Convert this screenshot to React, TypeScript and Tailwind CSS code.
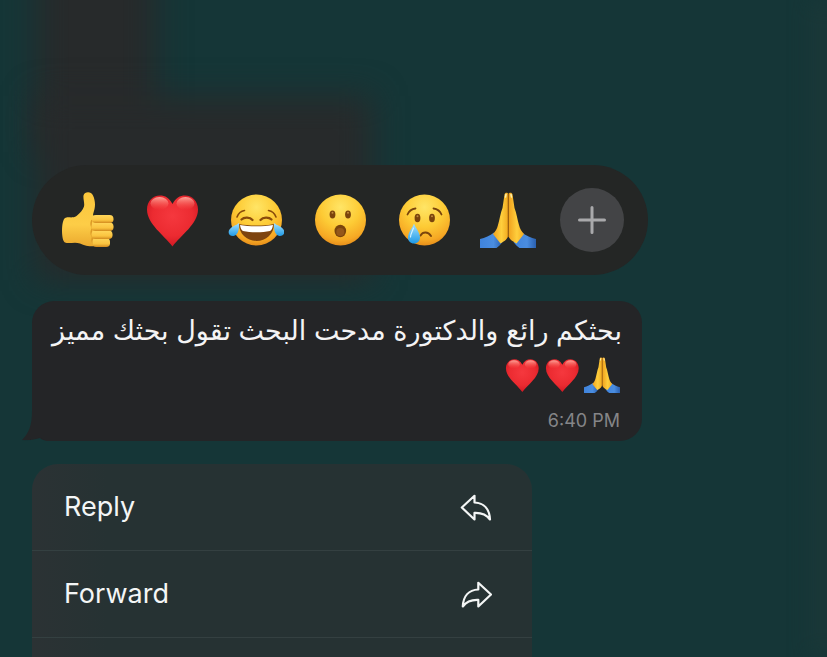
import type { ReactNode } from 'react';

interface EmojiProps {
  className?: string;
}

interface Reaction {
  name: string;
  icon: ReactNode;
}

interface MenuAction {
  label: string;
  icon: ReactNode;
}

// Gradients shared by every emoji on the page
const EmojiDefs = () => (
  <svg className="absolute size-0" aria-hidden="true">
    <defs>
      <radialGradient id="face" cx="50%" cy="25%" r="76%">
        <stop offset="0" stopColor="#ffe566" />
        <stop offset="0.5" stopColor="#fdcb35" />
        <stop offset="0.85" stopColor="#f6a824" />
        <stop offset="1" stopColor="#e58c1a" />
      </radialGradient>
      <radialGradient id="heart" cx="50%" cy="40%" r="65%">
        <stop offset="0" stopColor="#f5383e" />
        <stop offset="0.6" stopColor="#ec2b31" />
        <stop offset="1" stopColor="#cb1420" />
      </radialGradient>
      <linearGradient id="shine" x1="0" y1="0" x2="0" y2="1">
        <stop offset="0" stopColor="#ffb3a6" stopOpacity="0.9" />
        <stop offset="1" stopColor="#ff5a50" stopOpacity="0" />
      </linearGradient>
      <linearGradient id="skin" x1="0" y1="0" x2="0" y2="1">
        <stop offset="0" stopColor="#fbc63c" />
        <stop offset="0.6" stopColor="#fdcd47" />
        <stop offset="1" stopColor="#eba92e" />
      </linearGradient>
      <linearGradient id="finger" x1="0" y1="0" x2="0" y2="1">
        <stop offset="0" stopColor="#ffd65a" />
        <stop offset="0.65" stopColor="#fac33f" />
        <stop offset="1" stopColor="#d28a1e" />
      </linearGradient>
      <linearGradient id="palm" x1="0" y1="0" x2="1" y2="0">
        <stop offset="0" stopColor="#f0a01c" />
        <stop offset="0.55" stopColor="#ffcf3d" />
        <stop offset="1" stopColor="#f2a91f" />
      </linearGradient>
      <linearGradient id="sleeve" x1="0" y1="0" x2="1" y2="0">
        <stop offset="0" stopColor="#3f83dc" />
        <stop offset="0.6" stopColor="#4a8de0" />
        <stop offset="1" stopColor="#2a5fae" />
      </linearGradient>
      <linearGradient id="tear" x1="0" y1="0" x2="0" y2="1">
        <stop offset="0" stopColor="#a5e2ff" />
        <stop offset="1" stopColor="#1f9ae6" />
      </linearGradient>
    </defs>
  </svg>
);

const ThumbsUp = ({ className }: EmojiProps) => (
  <svg className={className} viewBox="0 0 56 56" aria-hidden="true">
    <path
      d="M5 26C9 24.500 13 26.500 16.500 24C20 21 23 18 24 14.500C24.800 11 23 7 23.500 3.500C24.500 -.5 31 -1 33 3.500C35 7.500 35.500 13 34.500 17C34 19.500 33 21.500 33 23.500L40 25V53.500C34 55 26 54.500 20 51.500C15 49.500 9 52 5 50.500C1 48.500 1 29 5 26Z"
      fill="url(#skin)"
    />
    <path d="M32 28C30.500 31 31 34 32.500 36C31 39 31 43 32.500 45C31.500 48 32 50 33.500 52" fill="none" stroke="#dc9a26" strokeWidth="1.500" />
    <rect x="32.500" y="46" width="17.500" height="9" rx="3.800" fill="url(#finger)" />
    <rect x="31.500" y="38.500" width="21" height="8.500" rx="3.800" fill="url(#finger)" />
    <rect x="31.500" y="30.500" width="22" height="8.500" rx="3.800" fill="url(#finger)" />
    <rect x="32" y="23" width="21.500" height="8" rx="3.800" fill="url(#finger)" />
  </svg>
);

const Heart = ({ className }: EmojiProps) => (
  <svg className={className} viewBox="0 0 56 56" aria-hidden="true">
    <path
      d="M28.500 12C31.500 6 36 3.500 41 3.500C48.500 3.500 54 9.500 54 17.500C54 32 37 43 28.500 54.500C20 43 3 32 3 17.500C3 9.500 8.500 3.500 16 3.500C21 3.500 25.500 6 28.500 12Z"
      fill="url(#heart)"
    />
    <ellipse cx="15.500" cy="11.500" rx="9" ry="6.500" fill="url(#shine)" />
    <ellipse cx="41.500" cy="11.500" rx="9" ry="6.500" fill="url(#shine)" />
  </svg>
);

const Joy = ({ className }: EmojiProps) => (
  <svg className={className} viewBox="0 0 56 56" aria-hidden="true">
    <circle cx="28.500" cy="28" r="25.500" fill="url(#face)" />
    <g fill="none" stroke="#8a4b0b" strokeLinecap="round">
      <path d="M9 25C10.500 21 13 19 16.500 18.500M48 25C46.500 21 44 19 40.500 18.500" strokeWidth="1.600" />
      <path d="M13.500 27.500C16 24.800 22 24.800 24.500 28M32.500 28C35 24.800 41 24.800 43.500 27.500" strokeWidth="2.200" />
    </g>
    <path d="M11 32C20 34 37 34 46 32C46 42 38 49 28.500 49C19 49 11 42 11 32Z" fill="#7d4410" />
    <path d="M12 33C21 34.800 36 34.800 45 33C44.500 36.500 43.500 38 42 39C34 40.800 23 40.800 15 39C13.500 38 12.500 36.500 12 33Z" fill="#fff" />
    <path d="M11 31C11.500 36 10.500 43.500 5.500 44C1 44.300 -.5 40.500 1.500 37.500C3.500 34.500 8 33.500 11 31Z" fill="url(#tear)" />
    <path d="M46 31C45.500 36 46.500 43.500 51.500 44C56 44.300 57.500 40.500 55.500 37.500C53.500 34.500 49 33.500 46 31Z" fill="url(#tear)" />
  </svg>
);

const Astonished = ({ className }: EmojiProps) => (
  <svg className={className} viewBox="0 0 56 56" aria-hidden="true">
    <circle cx="28.500" cy="28" r="25.500" fill="url(#face)" />
    <g fill="#7a440c">
      <ellipse cx="20.500" cy="22.500" rx="2.900" ry="4" />
      <ellipse cx="36" cy="22.500" rx="2.900" ry="4" />
      <ellipse cx="28.300" cy="39" rx="5.800" ry="6.200" />
    </g>
    <ellipse cx="28.300" cy="40" rx="4" ry="4" fill="#95571a" />
    <circle cx="20.500" cy="20.800" r="1" fill="#c08a3a" />
    <circle cx="36" cy="20.800" r="1" fill="#c08a3a" />
  </svg>
);

const Crying = ({ className }: EmojiProps) => (
  <svg className={className} viewBox="0 0 56 56" aria-hidden="true">
    <circle cx="28.500" cy="28" r="25.500" fill="url(#face)" />
    <g fill="none" stroke="#7a440c" strokeLinecap="round">
      <path d="M11.500 22.500C13 19 16 17 19.500 16.500M45.500 22.500C44 19 41 17 37.500 16.500" strokeWidth="1.800" />
      <path d="M24.500 43.500C27 39.500 32 39.500 35 44" strokeWidth="2" />
    </g>
    <ellipse cx="21.500" cy="26" rx="2.900" ry="4.300" fill="#7a440c" />
    <ellipse cx="36" cy="26" rx="2.900" ry="4.300" fill="#7a440c" />
    <circle cx="21.500" cy="24.300" r="1" fill="#c08a3a" />
    <circle cx="36" cy="24.300" r="1" fill="#c08a3a" />
    <path d="M18 31.500C19.500 36 24 40.500 24 45.500C24 49 21.500 51.500 18 51.500C14.500 51.500 12 49 12 45.500C12 40.500 16.500 36 18 31.500Z" fill="url(#tear)" />
    <path d="M17.500 36C16.500 39 14.500 42 14.500 45" fill="none" stroke="#d4f2ff" strokeWidth="1.200" strokeLinecap="round" />
  </svg>
);

const FoldedHands = ({ className }: EmojiProps) => (
  <svg className={className} viewBox="0 0 56 56" aria-hidden="true">
    <path d="M0 47C5 46 10 43.500 14 40.500L22.500 50C20.500 53 18 55 16.500 56H0Z" fill="url(#sleeve)" />
    <path d="M56 47C51 46 46 43.500 42 40.500L33.500 50C35.500 53 38 55 39.500 56H56Z" fill="url(#sleeve)" />
    <path d="M28.300 2C27.500 0 25 .3 24.500 2.500L22.500 16C20.500 21 19.500 28 18 33C17 37 15.500 39.500 13 42L20.500 51.500C25 49 28 46.500 28.300 43Z" fill="url(#palm)" />
    <path d="M28.300 2C29.500 0 32 .3 32.500 2.500L34.500 16C36.500 21 37.500 28 39 33C40 37 41.500 39.500 44 42L36.500 51.500C32 49 28.500 46.500 28.300 43Z" fill="url(#palm)" />
    <path d="M28.300 2V45" stroke="#9b5d0c" strokeWidth="1.200" />
    <path d="M26 2.500L25.500 5M31 2.500L31.500 5" stroke="#fff0a8" strokeWidth="1.500" strokeLinecap="round" />
  </svg>
);

const ReplyArrow = () => (
  <svg className="size-8" viewBox="0 0 32 32" fill="none" stroke="currentColor" strokeWidth="2.200" strokeLinejoin="round" aria-hidden="true">
    <path d="M1.800 16.500L14.500 4.800V11.500C24 11.800 29.500 18 30 28.500C26.500 23.500 22 21.500 14.500 21.800V28.500Z" />
  </svg>
);

const ForwardArrow = () => (
  <svg className="size-8" viewBox="0 0 32 32" fill="none" stroke="currentColor" strokeWidth="2.200" strokeLinejoin="round" aria-hidden="true">
    <path d="M31 16.500L18.300 4.800V11.500C8.800 11.800 3.300 18 2.800 28.500C6.300 23.500 10.800 21.500 18.300 21.800V28.500Z" />
  </svg>
);

const reactions: Reaction[] = [
  { name: 'Thumbs up', icon: <ThumbsUp className="size-14" /> },
  { name: 'Heart', icon: <Heart className="size-14" /> },
  { name: 'Tears of joy', icon: <Joy className="size-14" /> },
  { name: 'Astonished', icon: <Astonished className="size-14" /> },
  { name: 'Crying', icon: <Crying className="size-14" /> },
  { name: 'Folded hands', icon: <FoldedHands className="size-14" /> },
];

const actions: MenuAction[] = [
  { label: 'Reply', icon: <ReplyArrow /> },
  { label: 'Forward', icon: <ForwardArrow /> },
];

const ReactionBar = () => (
  <div className="flex w-full max-w-[616px] items-center justify-between rounded-full bg-[#242625] px-6 py-[23px]">
    {reactions.map((reaction) => (
      <button key={reaction.name} type="button" aria-label={reaction.name} className="flex size-16 items-center justify-center">
        {reaction.icon}
      </button>
    ))}
    <button
      type="button"
      aria-label="More reactions"
      className="flex size-16 items-center justify-center rounded-full bg-[#434446] text-[#a9a9ab]"
    >
      <svg className="size-8" viewBox="0 0 32 32" stroke="currentColor" strokeWidth="3" strokeLinecap="round" aria-hidden="true">
        <path d="M16 3.500V28.500M3.500 16H28.500" />
      </svg>
    </button>
  </div>
);

const MessageBubble = () => (
  <article className="relative w-full max-w-[610px] rounded-[22px] rounded-bl-none bg-[#242527] px-5 pt-2">
    {/* Bubble tail */}
    <svg className="absolute bottom-0 -left-2.5 h-12 w-6" viewBox="0 0 24 48" aria-hidden="true">
      <path d="M10 0V18C10 32 7 40 0 47C8 48 14 46 18 44L24 48V0Z" fill="#242527" />
      <path d="M0 47.500C8 48 14 46 18 45C20 47 23 48 28 48H0Z" fill="#153637" />
    </svg>
    <div dir="rtl" lang="ar" className="relative text-[27px] leading-[44px] text-[#f4f4f5]">
      <p className="whitespace-nowrap">بحثكم رائع والدكتورة مدحت البحث تقول بحثك مميز</p>
      <p className="flex h-11 items-center gap-1 pr-0.5">
        <FoldedHands className="size-9" />
        <Heart className="size-9" />
        <Heart className="size-9" />
      </p>
    </div>
    <time className="relative block pt-1 pr-0.5 text-right text-[18px] leading-10 text-[#858588]">6:40 PM</time>
  </article>
);

const ContextMenu = () => (
  <div className="flex w-full max-w-[500px] flex-1 flex-col rounded-t-[26px] bg-linear-to-r from-[#2b3234] to-[#263233] to-15%">
    {actions.map((action) => (
      <button
        key={action.label}
        type="button"
        className="flex h-[87px] shrink-0 items-center justify-between border-b border-[#344041] pr-10 pl-8 text-[27px] text-[#f4f6f6]"
      >
        {action.label}
        {action.icon}
      </button>
    ))}
  </div>
);

export default function App() {
  return (
    <div className="relative h-screen overflow-hidden bg-[#153637] font-['Inter','DejaVu_Sans',sans-serif]">
      <EmojiDefs />

      {/* Blurred chat behind the menu */}
      <div className="absolute -top-10 left-9 h-48 w-30 bg-[#272a2b] blur-lg" />
      <div className="absolute top-24 left-9 h-46 w-84 bg-[#272a2b] blur-lg" />
      <div className="absolute inset-y-0 -right-2 w-5 bg-[#1d3839] blur-md" />

      <main className="relative flex h-full flex-col px-8 pt-[165px]">
        <ReactionBar />
        <div className="flex flex-1 flex-col gap-[23px] pt-[26px]">
          <MessageBubble />
          <ContextMenu />
        </div>
      </main>
    </div>
  );
}
